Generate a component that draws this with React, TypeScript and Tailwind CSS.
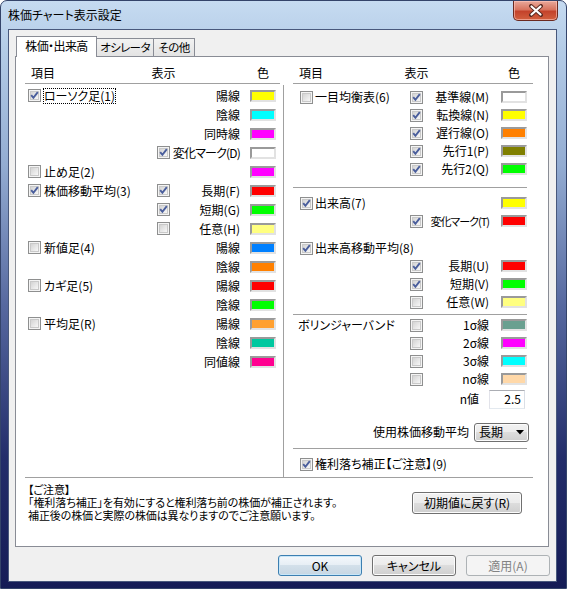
import React from "react";

type Row = {
  main?: string;
  plain?: string;
  on?: boolean;
  focus?: boolean;
  subOn?: boolean;
  sub?: string;
  tight?: boolean;
  color?: string;
};

const leftRows: Row[] = [
  { main: "ローソク足(1)", on: true, focus: true, sub: "陽線", color: "bg-[#ffff00]" },
  { sub: "陰線", color: "bg-[#00ffff]" },
  { sub: "同時線", color: "bg-[#ff00ff]" },
  { subOn: true, sub: "変化マーク(D)", tight: true, color: "bg-white" },
  { main: "止め足(2)", on: false, color: "bg-[#ff00ff]" },
  { main: "株価移動平均(3)", on: true, subOn: true, sub: "長期(F)", color: "bg-[#ff0000]" },
  { subOn: true, sub: "短期(G)", color: "bg-[#00ff00]" },
  { subOn: false, sub: "任意(H)", color: "bg-[#ffff80]" },
  { main: "新値足(4)", on: false, sub: "陽線", color: "bg-[#0080ff]" },
  { sub: "陰線", color: "bg-[#ff8000]" },
  { main: "カギ足(5)", on: false, sub: "陽線", color: "bg-[#ff0000]" },
  { sub: "陰線", color: "bg-[#00ff00]" },
  { main: "平均足(R)", on: false, sub: "陽線", color: "bg-[#ffa030]" },
  { sub: "陰線", color: "bg-[#00c8a0]" },
  { sub: "同値線", color: "bg-[#ff0090]" },
];

const ichimoku: Row[] = [
  { main: "一目均衡表(6)", on: false, subOn: true, sub: "基準線(M)", color: "bg-white" },
  { subOn: true, sub: "転換線(N)", color: "bg-[#ffff00]" },
  { subOn: true, sub: "遅行線(O)", color: "bg-[#ff8000]" },
  { subOn: true, sub: "先行1(P)", color: "bg-[#808000]" },
  { subOn: true, sub: "先行2(Q)", color: "bg-[#00ff00]" },
];

const volume: Row[] = [
  { main: "出来高(7)", on: true, color: "bg-[#ffff00]" },
  { subOn: true, sub: "変化マーク(T)", tight: true, color: "bg-[#ff0000]" },
];

const volumeMa: Row[] = [
  { main: "出来高移動平均(8)", on: true },
  { subOn: true, sub: "長期(U)", color: "bg-[#ff0000]" },
  { subOn: true, sub: "短期(V)", color: "bg-[#00ff00]" },
  { subOn: false, sub: "任意(W)", color: "bg-[#ffff80]" },
];

const bollinger: Row[] = [
  { plain: "ボリンジャーバンド", subOn: false, sub: "1σ線", color: "bg-[#6aa090]" },
  { subOn: false, sub: "2σ線", color: "bg-[#ff00ff]" },
  { subOn: false, sub: "3σ線", color: "bg-[#00ffff]" },
  { subOn: false, sub: "nσ線", color: "bg-[#ffd8a8]" },
];

function Check({ on }: { on: boolean }) {
  return (
    <span className="relative inline-flex h-[13px] w-[13px] shrink-0 items-center justify-center border border-[#8e8f8f] bg-[#f4f4f4]">
      <span className="h-[9px] w-[9px] border border-[#c9c9c9] bg-gradient-to-br from-[#d4d4d4] to-[#f7f7f7]" />
      {on && (
        <svg className="absolute left-0 top-0" width="11" height="11" viewBox="0 0 11 11">
          <path d="M2.2 5.2 L4.4 7.8 L8.8 2.2" fill="none" stroke="#4a5e9c" strokeWidth="1.9" />
        </svg>
      )}
    </span>
  );
}

function Swatch({ color }: { color: string }) {
  return (
    <span
      className={`block h-[12px] w-[26px] border-2 border-t-[#9a9a9a] border-l-[#9a9a9a] border-r-[#e2e2e2] border-b-[#e2e2e2] ${color}`}
    />
  );
}

function LeftRow({ r }: { r: Row }) {
  return (
    <div className="flex h-[19px] items-center">
      <div className="flex w-[132px] items-center pl-[3px]">
        {r.main && (
          <>
            <Check on={!!r.on} />
            <span
              className={`ml-[3px] whitespace-nowrap leading-[14px] ${r.focus ? "outline outline-1 outline-dotted outline-black" : ""}`}
            >
              {r.main}
            </span>
          </>
        )}
      </div>
      <div className="flex w-[13px]">{r.subOn !== undefined && <Check on={r.subOn} />}</div>
      <div className={`flex w-[70px] justify-end whitespace-nowrap ${r.tight ? "tracking-[-0.8px]" : ""}`}>
        {r.sub}
      </div>
      <div className="ml-[10px] w-[26px]">{r.color && <Swatch color={r.color} />}</div>
    </div>
  );
}

function RightRow({ r }: { r: Row }) {
  return (
    <div className="flex h-[18px] items-center">
      <div className="flex w-[117px] items-center pl-[7px]">
        {r.main && (
          <>
            <Check on={!!r.on} />
            <span className="ml-[2px] whitespace-nowrap">{r.main}</span>
          </>
        )}
        {r.plain && <span className="-ml-[2px] whitespace-nowrap">{r.plain}</span>}
      </div>
      <div className="flex w-[13px]">{r.subOn !== undefined && <Check on={r.subOn} />}</div>
      <div
        className={`flex w-[66px] justify-end whitespace-nowrap ${r.tight ? "text-[11px] tracking-[-1px]" : ""}`}
      >
        {r.sub}
      </div>
      <div className="ml-[12px] w-[26px]">{r.color && <Swatch color={r.color} />}</div>
    </div>
  );
}

function Btn({
  children,
  kind = "normal",
  className = "",
}: {
  children: React.ReactNode;
  kind?: "normal" | "default" | "disabled";
  className?: string;
}) {
  const look =
    kind === "default"
      ? "border-[#3c7fb1] bg-[linear-gradient(#f4f8fb_0%,#e6eef5_50%,#d3e0ea_50%,#c6d6e3_100%)] shadow-[inset_0_0_0_1px_#c8e6f8]"
      : kind === "disabled"
        ? "border-[#adb2b5] bg-[#f4f4f4] text-[#838383]"
        : "border-[#707070] bg-[linear-gradient(#f2f2f2_0%,#ebebeb_50%,#dddddd_50%,#cfcfcf_100%)] shadow-[inset_0_0_0_1px_#fcfcfc]";
  return (
    <div className={`flex items-center justify-center rounded-[3px] border ${look} ${className}`}>{children}</div>
  );
}

export default function App() {
  return (
    <div className="flex h-[589px] w-[567px] flex-col overflow-hidden rounded-t-[7px] border border-[#34446a] bg-[linear-gradient(180deg,#c6dbf1_0%,#b4cce7_8%,#93acd2_28%,#56689f_52%,#232d6a_78%,#151c56_100%)] font-['Noto_Sans_CJK_JP','Noto_Sans',sans-serif] text-[12px] text-black [font-feature-settings:'palt']">
      {/* title bar */}
      <div className="flex h-[28px] shrink-0 items-start">
        <span className="ml-[7px] mt-[6px] leading-[16px]">株価チャート表示設定</span>
        <div className="ml-auto mr-[8px] flex h-[20px] w-[45px] items-center justify-center rounded-b-[5px] border border-t-0 border-[#6b2a20] bg-[linear-gradient(180deg,#e9a99b_0%,#d8745f_45%,#c4432b_55%,#d2603f_100%)] shadow-[inset_0_0_0_1px_rgba(255,200,190,0.6)]">
          <svg width="16" height="13" viewBox="0 0 16 13">
            <path d="M3 2 L13 11 M13 2 L3 11" stroke="#5a2a22" strokeWidth="4" strokeLinecap="round" />
            <path d="M3.5 2.5 L12.5 10.5 M12.5 2.5 L3.5 10.5" stroke="#ffffff" strokeWidth="2.2" strokeLinecap="round" />
          </svg>
        </div>
      </div>

      {/* client area */}
      <div className="ml-[7px] mr-[9px] flex h-[553px] flex-col border border-[#48587c] bg-[#f0f0f0] pl-[6px] pt-[6px]">
        {/* tabs */}
        <div className="relative z-10 flex h-[20px] items-end pl-[1px] tracking-[-0.6px]">
          <div className="-mb-px flex h-[21px] w-[81px] items-center justify-center border border-b-0 border-[#898c95] bg-white pb-[2px]">
            株価・出来高
          </div>
          <div className="flex h-[18px] w-[57px] items-center justify-center border border-b-0 border-l-0 border-[#898c95] bg-[linear-gradient(#f2f2f2,#e3e3e3)] text-[11.5px]">
            オシレータ
          </div>
          <div className="flex h-[18px] w-[41px] items-center justify-center border border-b-0 border-l-0 border-[#898c95] bg-[linear-gradient(#f2f2f2,#e3e3e3)] text-[11.5px]">
            その他
          </div>
        </div>

        {/* panel */}
        <div className="flex h-[491px] w-[534px] flex-col border border-[#898c95] bg-white pl-[9px] pt-[6px]">
          <div className="flex h-[414px]">
            {/* left column */}
            <div className="flex w-[255px] flex-col">
              <div className="flex h-[21px] items-center border-b border-[#a0a0a0]">
                <div className="w-[132px] pl-[6px]">項目</div>
                <div className="flex w-[13px] justify-center whitespace-nowrap">表示</div>
                <div className="w-[70px]" />
                <div className="ml-[10px] flex w-[26px] justify-center">色</div>
              </div>
              <div className="pt-[2px]">
                {leftRows.map((r, i) => (
                  <LeftRow key={i} r={r} />
                ))}
              </div>
            </div>

            <div className="ml-[3px] mt-[22px] w-px bg-[#a0a0a0]" />

            {/* right column */}
            <div className="ml-[9px] flex w-[240px] flex-col">
              <div className="flex h-[21px] items-center border-b border-[#a0a0a0]">
                <div className="w-[117px] pl-[6px]">項目</div>
                <div className="flex w-[13px] justify-center whitespace-nowrap">表示</div>
                <div className="w-[66px]" />
                <div className="ml-[12px] flex w-[26px] justify-center">色</div>
              </div>
              <div className="pt-[4px]">
                {ichimoku.map((r, i) => (
                  <RightRow key={i} r={r} />
                ))}
              </div>
              <div className="mt-[9px] h-px w-[234px] bg-[#a0a0a0]" />
              <div className="mt-[6px]">
                {volume.map((r, i) => (
                  <RightRow key={i} r={r} />
                ))}
              </div>
              <div className="mt-[9px]">
                {volumeMa.map((r, i) => (
                  <RightRow key={i} r={r} />
                ))}
              </div>
              <div className="mt-[3px] h-px w-[234px] bg-[#a0a0a0]" />
              <div className="mt-[1px]">
                {bollinger.map((r, i) => (
                  <RightRow key={i} r={r} />
                ))}
              </div>
              <div className="mt-[1px] flex h-[20px] items-center">
                <div className="flex w-[186px] justify-end">n値</div>
                <div className="ml-[10px] flex h-[19px] w-[36px] items-center justify-end border border-[#abadb3] border-l-[#e2e3ea] border-r-[#dbdfe6] border-b-[#e3e9ef] bg-white pr-[3px]">
                  2.5
                </div>
              </div>
              <div className="mt-[13px] flex h-[20px] items-center">
                <div className="flex w-[176px] justify-end whitespace-nowrap">使用株価移動平均</div>
                <Btn className="ml-[5px] h-[19px] w-[55px] !justify-between px-[4px]">
                  <span>長期</span>
                  <svg width="8" height="5" viewBox="0 0 8 5">
                    <path d="M0 0 L8 0 L4 4.5 Z" fill="#000" />
                  </svg>
                </Btn>
              </div>
              <div className="mt-[6px] h-px w-[234px] bg-[#a0a0a0]" />
              <div className="mt-[6px] flex h-[18px] items-center pl-[7px]">
                <Check on />
                <span className="ml-[2px] whitespace-nowrap">権利落ち補正【ご注意】(9)</span>
              </div>
            </div>
          </div>

          <div className="h-px w-[508px] bg-[#a0a0a0]" />

          <div className="flex w-[508px] items-start pl-[3px]">
            <div className="mt-[5px] text-[11px] leading-[13px] tracking-[-0.1px]">
              <div>【ご注意】</div>
              <div>「権利落ち補正」を有効にすると権利落ち前の株価が補正されます。</div>
              <div>補正後の株価と実際の株価は異なりますのでご注意願います。</div>
            </div>
            <Btn className="ml-auto mr-[11px] mt-[14px] h-[22px] w-[110px]">初期値に戻す(R)</Btn>
          </div>
        </div>

        {/* dialog buttons */}
        <div className="mt-[8px] flex justify-end gap-[10px] pr-[6px]">
          <Btn kind="default" className="h-[21px] w-[84px]">
            OK
          </Btn>
          <Btn className="h-[21px] w-[84px]">キャンセル</Btn>
          <Btn kind="disabled" className="h-[21px] w-[84px]">
            適用(A)
          </Btn>
        </div>
      </div>
    </div>
  );
}
